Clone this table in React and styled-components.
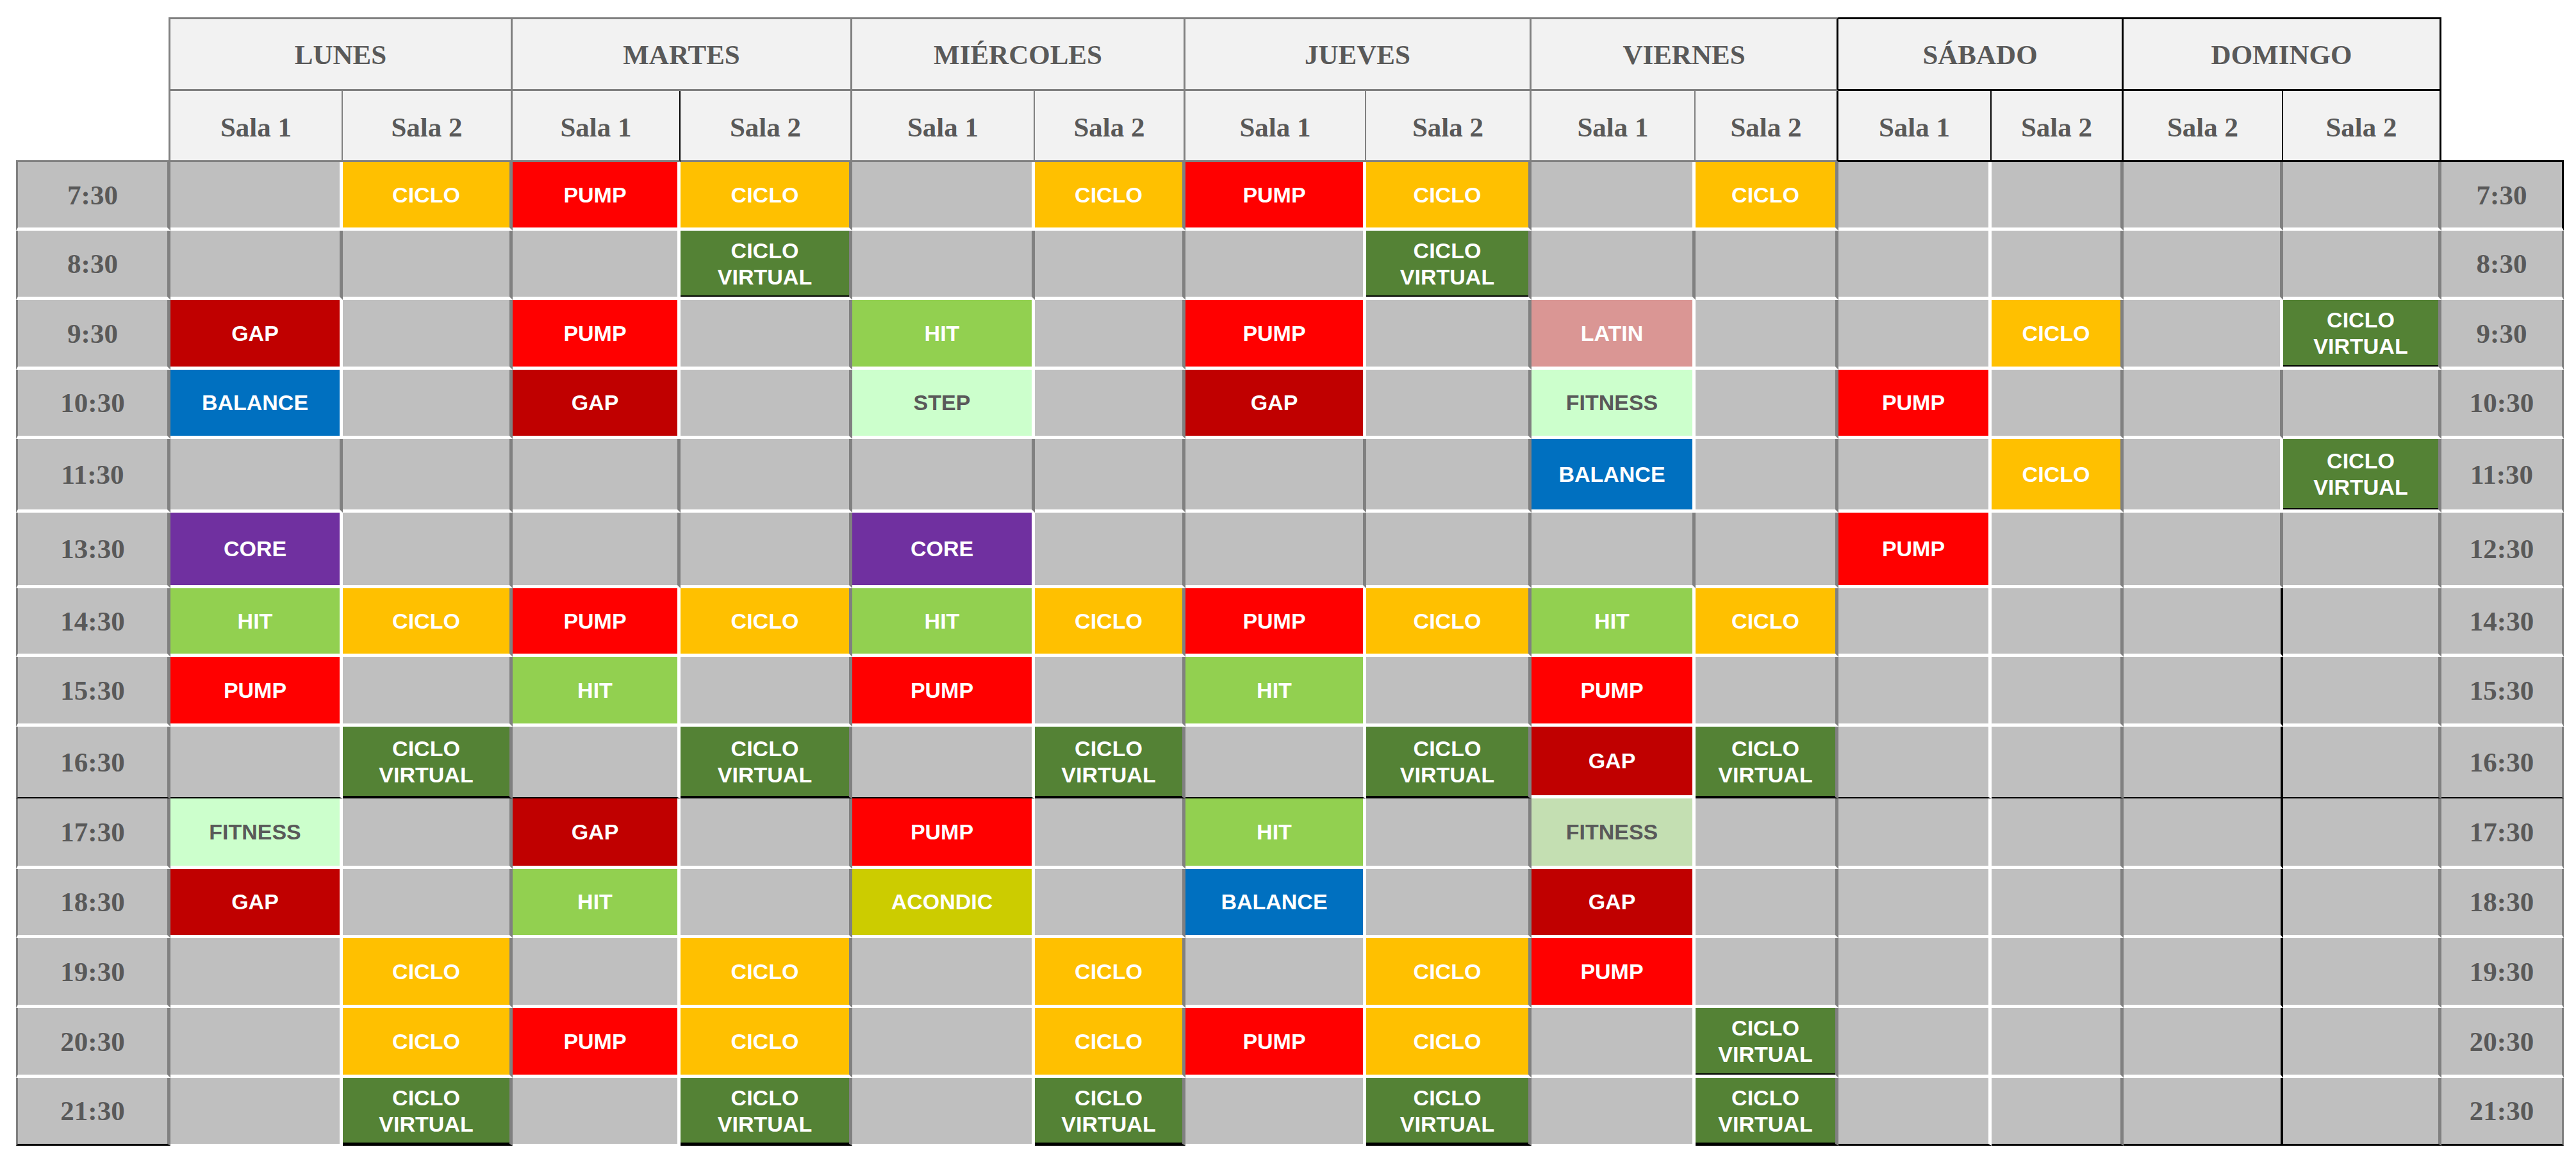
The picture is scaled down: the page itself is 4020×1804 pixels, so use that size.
import React from 'react';
import styled, { createGlobalStyle } from 'styled-components';

const GlobalStyle = createGlobalStyle`
  html, body {
    margin: 0;
    padding: 0;
    background: #ffffff;
  }
  body {
    font-family: "Liberation Sans", Arial, sans-serif;
  }
`;

const GRAY_LINE = '#808080';
const TEXT_GRAY = '#595959';

// column widths: time | 14 salas | time
const COLS = [241, 269, 265, 262, 268, 285, 235, 282, 258, 256, 223, 239, 206, 249, 247, 191];
const ROWS = [107, 108, 109, 108, 115, 118, 107, 109, 112, 110, 108, 109, 109, 106];

const DAYS = ['LUNES', 'MARTES', 'MIÉRCOLES', 'JUEVES', 'VIERNES', 'SÁBADO', 'DOMINGO'];
const SALAS = [
  'Sala 1', 'Sala 2', 'Sala 1', 'Sala 2', 'Sala 1', 'Sala 2', 'Sala 1',
  'Sala 2', 'Sala 1', 'Sala 2', 'Sala 1', 'Sala 2', 'Sala 2', 'Sala 2',
];

const CLASSES = {
  C: { label: 'CICLO', bg: '#FFC000' },
  V: { label: 'CICLO\nVIRTUAL', bg: '#548235', virtual: true },
  P: { label: 'PUMP', bg: '#FF0000' },
  G: { label: 'GAP', bg: '#C00000' },
  H: { label: 'HIT', bg: '#92D050' },
  S: { label: 'STEP', bg: '#CCFFCC', dark: true },
  B: { label: 'BALANCE', bg: '#0070C0' },
  K: { label: 'CORE', bg: '#7030A0' },
  L: { label: 'LATIN', bg: '#DA9694' },
  F: { label: 'FITNESS', bg: '#CCFFCC', dark: true },
  f: { label: 'FITNESS', bg: '#C4DFB2', dark: true },
  A: { label: 'ACONDIC', bg: '#CCCC00' },
};

const SCHEDULE = [
  { left: '7:30', right: '7:30', slots: '.CPC.CPC.C....' },
  { left: '8:30', right: '8:30', slots: '...V...V......' },
  { left: '9:30', right: '9:30', slots: 'G.P.H.P.L..C.V' },
  { left: '10:30', right: '10:30', slots: 'B.G.S.G.F.P...' },
  { left: '11:30', right: '11:30', slots: '........B..C.V' },
  { left: '13:30', right: '12:30', slots: 'K...K.....P...' },
  { left: '14:30', right: '14:30', slots: 'HCPCHCPCHC....' },
  { left: '15:30', right: '15:30', slots: 'P.H.P.H.P.....' },
  { left: '16:30', right: '16:30', slots: '.V.V.V.VGV....' },
  { left: '17:30', right: '17:30', slots: 'F.G.P.H.f.....' },
  { left: '18:30', right: '18:30', slots: 'G.H.A.B.G.....' },
  { left: '19:30', right: '19:30', slots: '.C.C.C.CP.....' },
  { left: '20:30', right: '20:30', slots: '.CPC.CPC.V....' },
  { left: '21:30', right: '21:30', slots: '.V.V.V.V.V....' },
];

const Page = styled.div`
  padding: 27px 0 0 25px;
`;

const Grid = styled.div`
  display: grid;
  grid-template-columns: ${COLS.map((w) => `${w}px`).join(' ')};
  grid-template-rows: 115px 111px ${ROWS.map((h) => `${h}px`).join(' ')};
  width: max-content;
`;

const Corner = styled.div`
  grid-row: span 2;
  box-sizing: border-box;
  background: #ffffff;
  border-bottom: 3px solid ${(p) => (p.$side === 'right' ? '#000' : GRAY_LINE)};
  border-right: ${(p) => (p.$side === 'left' ? `3px solid ${GRAY_LINE}` : 'none')};
`;

const HeadText = styled.div`
  box-sizing: border-box;
  display: flex;
  align-items: center;
  justify-content: center;
  background: #f2f2f2;
  color: ${TEXT_GRAY};
  font-family: "Liberation Serif", "Times New Roman", serif;
  font-weight: 700;
  font-size: 43px;
`;

const DayHeader = styled(HeadText)`
  grid-column: span 2;
  border-top: 3px solid ${(p) => (p.$weekend ? '#000' : GRAY_LINE)};
  border-bottom: 3px solid ${(p) => (p.$weekend ? '#000' : GRAY_LINE)};
  border-right: 3px solid ${(p) => p.$edge};
  padding-top: 2px;
`;

const SalaHeader = styled(HeadText)`
  border-bottom: 3px solid ${(p) => (p.$weekend ? '#000' : GRAY_LINE)};
  border-right: ${(p) => p.$thick}px solid ${(p) => p.$edge};
  padding-top: 4px;
`;

const TimeCell = styled.div`
  box-sizing: border-box;
  display: flex;
  align-items: center;
  justify-content: center;
  background: #bfbfbf;
  color: ${TEXT_GRAY};
  font-family: "Liberation Serif", "Times New Roman", serif;
  font-weight: 700;
  font-size: 43px;
  border-left: ${(p) => (p.$side === 'left' ? `3px solid ${GRAY_LINE}` : 'none')};
  border-right: ${(p) => (p.$side === 'left' ? '5px' : '3px')} solid ${(p) => p.$edge};
  border-bottom: ${(p) => p.$bottom};
`;

const SlotCell = styled.div`
  box-sizing: border-box;
  display: flex;
  align-items: center;
  justify-content: center;
  text-align: center;
  white-space: pre-line;
  background: ${(p) => p.$bg};
  color: ${(p) => (p.$dark ? TEXT_GRAY : '#ffffff')};
  font-family: "Liberation Sans", Arial, sans-serif;
  font-weight: 700;
  font-size: 34px;
  line-height: 41px;
  border-right: ${(p) => p.$right};
  border-bottom: ${(p) => p.$bottom};
  box-shadow: ${(p) => (p.$virtual ? 'inset 0 -2px 0 #000' : 'none')};
`;

const isLast = (r) => r === SCHEDULE.length - 1;

function slotBottom(r, j, cls) {
  if (r === 8) return j === 8 ? '5px solid #fff' : '2px solid #000';
  if (isLast(r)) {
    const black = (cls && cls.virtual) || j >= 10;
    return `3px solid ${black ? '#000' : '#fff'}`;
  }
  return '5px solid #fff';
}

function timeBottom(r) {
  if (r === 8) return '2px solid #000';
  if (isLast(r)) return '3px solid #000';
  return '5px solid #fff';
}

function slotRight(r, j, slots) {
  if (j % 2 === 1) return `5px solid ${GRAY_LINE}`;
  if (j === 10) return '5px solid #fff';
  if (j === 12 && r >= 6) return '4px solid #000';
  const busy = slots[j] !== '.' || slots[j + 1] !== '.';
  return `5px solid ${busy ? '#fff' : GRAY_LINE}`;
}

function salaEdge(j) {
  if (j === 2 || j >= 9) return '#000';
  return GRAY_LINE;
}

export default function App() {
  return (
    <>
      <GlobalStyle />
      <Page>
        <Grid>
          <Corner $side="left" />
          {DAYS.map((day, i) => (
            <DayHeader
              key={day}
              $weekend={i >= 5}
              $edge={i >= 4 ? '#000' : GRAY_LINE}
            >
              {day}
            </DayHeader>
          ))}
          <Corner $side="right" />
          {SALAS.map((sala, j) => (
            <SalaHeader
              key={j}
              $weekend={j >= 10}
              $edge={salaEdge(j)}
              $thick={j % 2 === 1 ? 3 : 2}
            >
              {sala}
            </SalaHeader>
          ))}
          {SCHEDULE.map((row, r) => (
            <React.Fragment key={row.left + r}>
              <TimeCell $side="left" $edge={GRAY_LINE} $bottom={timeBottom(r)}>
                {row.left}
              </TimeCell>
              {row.slots.split('').map((code, j) => {
                const cls = CLASSES[code];
                return (
                  <SlotCell
                    key={j}
                    $bg={cls ? cls.bg : '#bfbfbf'}
                    $dark={cls && cls.dark}
                    $virtual={cls && cls.virtual}
                    $right={slotRight(r, j, row.slots)}
                    $bottom={slotBottom(r, j, cls)}
                  >
                    {cls ? cls.label : ''}
                  </SlotCell>
                );
              })}
              <TimeCell
                $side="right"
                $edge={r === 0 ? '#000' : GRAY_LINE}
                $bottom={timeBottom(r)}
              >
                {row.right}
              </TimeCell>
            </React.Fragment>
          ))}
        </Grid>
      </Page>
    </>
  );
}
